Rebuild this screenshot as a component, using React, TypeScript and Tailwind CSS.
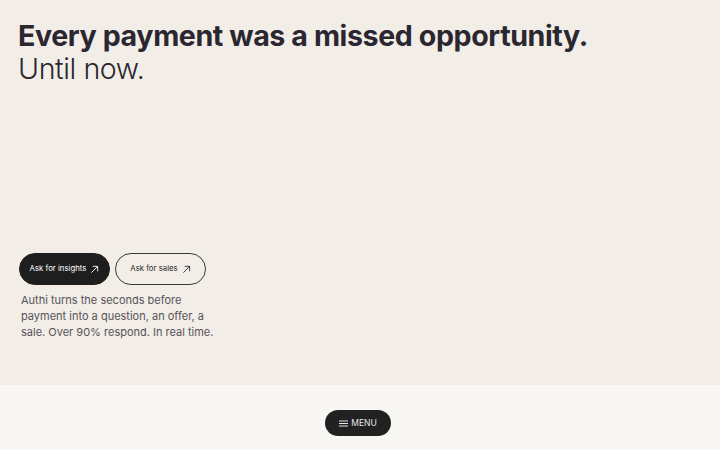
import React from 'react'

const font = { fontFamily: 'Inter, "Noto Sans", sans-serif' }

function ArrowIcon() {
  return (
    <svg width="9" height="9" viewBox="0 0 10 10" fill="none" stroke="currentColor" strokeWidth="1">
      <path d="M1.5 8.5 L8.5 1.5 M3 1.5 H8.5 V7" />
    </svg>
  )
}

export default function App() {
  return (
    <div className="w-[720px] h-[450px] flex flex-col text-[#2b2730]" style={font}>
      <section className="h-[385px] bg-[#f2ede7] px-[18px] pt-[19px] flex flex-col">
        <h1 className="text-[28.6px] leading-[33px] tracking-[-0.4px]">
          <span className="block font-bold">Every payment was a missed opportunity.</span>
          <span className="block font-light">Until now.</span>
        </h1>
        <div className="mt-auto mb-[45px] pl-px">
          <div className="flex gap-[5px]">
            <button className="h-[32px] w-[91px] rounded-full bg-[#1f1e1e] text-white text-[7.8px] flex items-center justify-center gap-[4px] border border-[#1f1e1e]">
              Ask for insights <ArrowIcon />
            </button>
            <button className="h-[32px] w-[91px] rounded-full border border-[#3a3838] text-[#2b2b2b] text-[7.8px] flex items-center justify-center gap-[4px]">
              Ask for sales <ArrowIcon />
            </button>
          </div>
          <p className="mt-[7px] ml-[2px] w-[200px] text-[11px] leading-[16px] text-[#57535a]">
            Authi turns the seconds before payment into a question, an offer, a sale. Over 90% respond. In real time.
          </p>
        </div>
      </section>
      <footer className="flex-1 bg-[#f8f7f3] flex justify-center pt-[25px]">
        <button className="mr-[4px] h-[26px] w-[66px] rounded-full bg-[#222122] text-[#e8e8e8] text-[8.5px] flex items-center justify-center gap-[3px]">
          <svg width="9" height="7" viewBox="0 0 9 7" fill="none" stroke="currentColor" strokeWidth="1">
            <path d="M0 1 H9 M0 3.5 H9 M0 6 H9" />
          </svg>
          MENU
        </button>
      </footer>
    </div>
  )
}
